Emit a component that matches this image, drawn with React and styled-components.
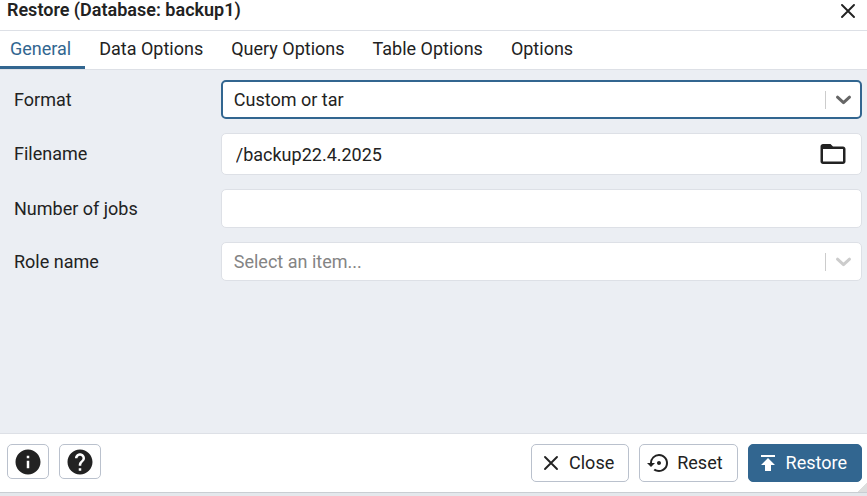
import React, { useState } from 'react';
import styled, { createGlobalStyle } from 'styled-components';
import {
  MdFolderOpen,
  MdInfo,
  MdHelp,
  MdSettingsBackupRestore,
  MdPublish,
} from 'react-icons/md';

const color = {
  primary: '#326690',
  text: '#222222',
  muted: '#848484',
  panel: '#ebeef3',
  line: '#dde0e6',
  outline: '#bac1cd',
};

const GlobalStyle = createGlobalStyle`
  *, *::before, *::after { box-sizing: border-box; }
  body {
    margin: 0;
    background: #e4e8ec;
    color: ${color.text};
    font-family: Roboto, "Liberation Sans", sans-serif;
    font-size: 18px;
    line-height: 24px;
  }
  button, input, select { font: inherit; color: inherit; }
`;

const Dialog = styled.form`
  display: flex;
  flex-direction: column;
  min-height: calc(100vh - 3px);
  background: #fff;
  border-bottom: 1px solid #c9ced3;
  box-shadow: 0 1px 3px rgba(0, 0, 0, 0.2);
`;

const TitleBar = styled.header`
  display: flex;
  justify-content: space-between;
  height: 31px;
  padding: 0 12px 0 7px;
  border-bottom: 1px solid ${color.line};
`;

const Title = styled.h1`
  margin: 0;
  font-size: 18px;
  line-height: 20px;
  font-weight: 600;
`;

const IconButton = styled.button`
  display: flex;
  align-items: center;
  padding: 0;
  border: 0;
  background: none;
  cursor: pointer;
`;

const CloseButton = styled(IconButton)`
  height: 22px;
`;

const Tabs = styled.div`
  display: flex;
  height: 39px;
  border-bottom: 1px solid ${color.line};
`;

const Tab = styled.button`
  padding: 0 14px;
  border: 0;
  border-bottom: 3px solid ${(p) => (p.$active ? color.primary : 'transparent')};
  background: none;
  color: ${(p) => (p.$active ? color.primary : color.text)};
  cursor: pointer;

  &:first-child { padding-left: 10px; }
`;

const Panel = styled.div`
  display: flex;
  flex-direction: column;
  flex: 1;
  gap: 14px;
  padding: 10px 5px 10px 7px;
  background: ${color.panel};
`;

const Field = styled.div`
  display: grid;
  grid-template-columns: minmax(0, 1fr) minmax(0, 3fr);
  align-items: center;
`;

const Label = styled.label`
  padding-left: 7px;
`;

const Control = styled.div`
  display: grid;
  align-items: center;
  height: ${(p) => (p.$tall ? '42px' : '39px')};
  border: ${(p) => (p.$focused ? `2px solid ${color.primary}` : `1px solid ${color.line}`)};
  border-radius: 5px;
  background: #fff;
  overflow: hidden;

  > * { grid-area: 1 / 1; }
`;

const TextInput = styled.input`
  width: 100%;
  height: 100%;
  padding: 0 54px 0 14px;
  border: 0;
  outline: 0;
  background: transparent;
`;

const Select = styled.select`
  width: 100%;
  height: 100%;
  padding: 0 44px 0 ${(p) => (p.$focused ? '11px' : '12px')};
  border: 0;
  outline: 0;
  appearance: none;
  background: transparent;
  color: ${(p) => (p.$empty ? color.muted : color.text)};
`;

const Indicator = styled.span`
  display: flex;
  align-items: center;
  justify-self: end;
  padding-right: ${(p) => (p.$focused ? '8px' : '9px')};
  color: ${(p) => (p.$focused ? '#666666' : '#cccccc')};
  pointer-events: none;

  &::before {
    content: "";
    height: 18px;
    margin-right: 9px;
    border-left: 1px solid #cccccc;
  }
`;

const Browse = styled(IconButton)`
  justify-self: end;
  margin-right: 13px;
`;

const Footer = styled.footer`
  display: flex;
  align-items: flex-start;
  gap: 10px;
  height: 59px;
  padding: 10px 5px 0 7px;
  border-top: 1px solid ${color.line};
  background: linear-gradient(135deg, transparent 50%, #dedede 50%) right bottom / 9px 9px no-repeat;
`;

const Spacer = styled.div`
  flex: 1;
`;

const Button = styled.button`
  display: flex;
  align-items: center;
  justify-content: center;
  gap: 6px;
  height: 38px;
  padding: 0 14px 0 7px;
  border: 1px solid ${(p) => (p.$primary ? color.primary : color.outline)};
  border-radius: 5px;
  background: ${(p) => (p.$primary ? color.primary : '#fff')};
  color: ${(p) => (p.$primary ? '#fff' : color.text)};
  cursor: pointer;
`;

const SquareButton = styled(Button)`
  width: 42px;
  height: 35px;
  padding: 0;
`;

const Cross = ({ box = 14 }) => (
  <svg width={box} height={box} viewBox={`${-box / 2} ${-box / 2} ${box} ${box}`} aria-hidden="true">
    <path d="M-6-6 6 6M6-6-6 6" fill="none" stroke="currentColor" strokeWidth="1.9" strokeLinecap="round" />
  </svg>
);

const Chevron = () => (
  <svg width="17" height="10" viewBox="0 0 17 10" aria-hidden="true">
    <path d="M2.5 2.2 8.5 7.6 14.5 2.2" fill="none" stroke="currentColor" strokeWidth="3" strokeLinecap="round" strokeLinejoin="round" />
  </svg>
);

const tabs = ['General', 'Data Options', 'Query Options', 'Table Options', 'Options'];

export default function App() {
  const [active, setActive] = useState('General');
  const [format, setFormat] = useState('custom');
  const [filename, setFilename] = useState('/backup22.4.2025');
  const [role, setRole] = useState('');

  return (
    <>
      <GlobalStyle />
      <Dialog onSubmit={(e) => e.preventDefault()}>
        <TitleBar>
          <Title>Restore (Database: backup1)</Title>
          <CloseButton type="button" aria-label="Close dialog"><Cross /></CloseButton>
        </TitleBar>
        <Tabs role="tablist">
          {tabs.map((name) => (
            <Tab
              key={name}
              type="button"
              role="tab"
              aria-selected={name === active}
              $active={name === active}
              onClick={() => setActive(name)}
            >
              {name}
            </Tab>
          ))}
        </Tabs>
        <Panel role="tabpanel">
          <Field>
            <Label htmlFor="format">Format</Label>
            <Control $focused>
              <Select id="format" $focused value={format} onChange={(e) => setFormat(e.target.value)}>
                <option value="custom">Custom or tar</option>
                <option value="directory">Directory</option>
              </Select>
              <Indicator $focused><Chevron /></Indicator>
            </Control>
          </Field>
          <Field>
            <Label htmlFor="filename">Filename</Label>
            <Control $tall>
              <TextInput id="filename" value={filename} onChange={(e) => setFilename(e.target.value)} />
              <Browse type="button" aria-label="Select file"><MdFolderOpen size={30} /></Browse>
            </Control>
          </Field>
          <Field>
            <Label htmlFor="jobs">Number of jobs</Label>
            <Control>
              <TextInput id="jobs" inputMode="numeric" />
            </Control>
          </Field>
          <Field>
            <Label htmlFor="role">Role name</Label>
            <Control>
              <Select id="role" $empty={!role} value={role} onChange={(e) => setRole(e.target.value)}>
                <option value="">Select an item...</option>
                <option value="postgres">postgres</option>
              </Select>
              <Indicator><Chevron /></Indicator>
            </Control>
          </Field>
        </Panel>
        <Footer>
          <SquareButton type="button" aria-label="Information"><MdInfo size={30} /></SquareButton>
          <SquareButton type="button" aria-label="Help"><MdHelp size={30} /></SquareButton>
          <Spacer />
          <Button type="button"><Cross box={24} />Close</Button>
          <Button type="reset"><MdSettingsBackupRestore size={24} />Reset</Button>
          <Button type="submit" $primary><MdPublish size={24} />Restore</Button>
        </Footer>
      </Dialog>
    </>
  );
}
